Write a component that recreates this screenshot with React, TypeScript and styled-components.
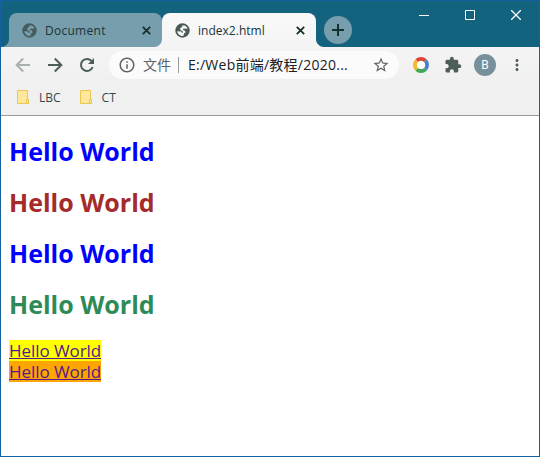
import React from 'react';
import styled, { createGlobalStyle } from 'styled-components';
import { MdInfoOutline, MdStarBorder, MdExtension, MdMoreVert } from 'react-icons/md';

const GlobalStyle = createGlobalStyle`
  * { box-sizing: border-box; }
  body { margin: 0; font-family: "Open Sans", "Noto Sans CJK SC", sans-serif; }
  svg { display: block; flex: none; }
`;

const Window = styled.div`
  width: 540px;
  height: 457px;
  border: 1px solid #1660a2;
  display: flex;
  flex-direction: column;
  background: #fff;
  overflow: hidden;
`;

const TitleBar = styled.header`
  height: 46px;
  flex: none;
  display: flex;
  align-items: flex-end;
  padding-left: 8px;
  background: #14637e;
`;

const Tab = styled.div<{ $active?: boolean }>`
  --fill: ${p => (p.$active ? '#f9f9f9' : '#779eac')};
  --foot: ${p => (p.$active ? '#f4f4f4' : '#779eac')};
  position: relative;
  z-index: ${p => (p.$active ? 1 : 0)};
  width: ${p => (p.$active ? 154 : 153)}px;
  height: 34px;
  padding: 0 11px 0 13px;
  display: flex;
  align-items: center;
  border-radius: 8px 8px 0 0;
  background: linear-gradient(var(--fill), var(--foot));
  color: ${p => (p.$active ? '#4a5b57' : '#465b5c')};

  &::before, &::after {
    content: '';
    position: absolute;
    bottom: 0;
    width: 8px;
    height: 8px;
  }
  &::before {
    left: -8px;
    background: radial-gradient(circle at 0 0, transparent 7.5px, var(--foot) 8.5px);
  }
  &::after {
    right: -8px;
    background: radial-gradient(circle at 100% 0, transparent 7.5px, var(--foot) 8.5px);
  }
`;

const TabTitle = styled.span<{ $spacing: number }>`
  flex: 1;
  margin-left: 8px;
  padding-top: 1px;
  font-size: 12px;
  line-height: 16px;
  letter-spacing: ${p => p.$spacing}px;
  white-space: nowrap;
  color: #19353a;
`;

const NewTab = styled.div`
  width: 28px;
  height: 28px;
  margin: 0 0 3px 8px;
  border-radius: 50%;
  display: grid;
  place-items: center;
  background: #779eac;
`;

const WindowControls = styled.div`
  display: flex;
  align-self: flex-start;
  margin-left: auto;
`;

const Control = styled.div`
  width: 46px;
  height: 28px;
  display: grid;
  place-items: center;
`;

const Chrome = styled.div`
  height: 69px;
  flex: none;
  border-bottom: 1px solid #999b9d;
  background: linear-gradient(#f4f4f4, #f0f0f0 34px);
`;

const Toolbar = styled.nav`
  height: 36px;
  display: flex;
  align-items: center;
  color: #4d5e59;
`;

const NavButtons = styled.div`
  display: flex;
  gap: 16px;
  width: 108px;
  padding-left: 14px;
`;

const Address = styled.div`
  display: flex;
  align-items: center;
  width: 290px;
  height: 28px;
  padding: 0 9px;
  border-radius: 14px;
  background: #fbfbfb;
  font-size: 14px;
  line-height: 20px;
  white-space: nowrap;
  color: #5f6368;
`;

const Scheme = styled.span`
  margin-left: 7px;
  padding-right: 7px;
`;

const Divider = styled.span`
  width: 1px;
  height: 16px;
  background: #999c9f;
`;

const Path = styled.span`
  flex: 1;
  margin-left: 9px;
  letter-spacing: 0.25px;
  color: #202124;
`;

const Actions = styled.div`
  display: flex;
  align-items: center;
  padding-left: 14px;
`;

const Extension = styled(MdExtension)`
  margin-left: 15px;
`;

const MenuDots = styled(MdMoreVert)`
  margin-left: -1px;
`;

const Avatar = styled.span`
  width: 22px;
  height: 22px;
  margin: 0 13px 0 12px;
  border-radius: 50%;
  display: grid;
  place-items: center;
  background: #78909c;
  color: #fff;
  font: 12px/22px Roboto, sans-serif;
`;

const Bookmarks = styled.div`
  height: 28px;
  display: flex;
  align-items: center;
  padding-left: 15px;
  gap: 18px;
`;

const Bookmark = styled.span`
  display: flex;
  align-items: center;
  gap: 10px;
  font-size: 12px;
  line-height: 16px;
  color: #35474b;
`;

const BookmarkLabel = styled.span`
  padding-top: 1px;
`;

const Page = styled.main`
  flex: 1;
  padding: 1px 8px 0;
`;

const Heading = styled.h1<{ $color: string }>`
  margin: 17px 0;
  font-size: 25px;
  font-weight: 700;
  line-height: 34px;
  color: ${p => p.$color};
`;

const Links = styled.div`
  display: flex;
  flex-direction: column;
  align-items: flex-start;
  padding-top: 2px;
`;

const Link = styled.a<{ $fill: string }>`
  height: 21px;
  line-height: 21px;
  font-size: 17px;
  letter-spacing: -0.07px;
  white-space: nowrap;
  color: #551a8b;
  text-decoration: underline;
  text-decoration-thickness: 1px;
  background: ${p => p.$fill};
`;

const Globe = ({ land }: { land: string }) => (
  <svg width="15" height="15" viewBox="0 0 15 15">
    <circle cx="7.5" cy="7.5" r="7.2" fill="currentColor" />
    <path
      d="M9.6 2.4C11 3 12.1 4 12.6 5.4l-2.2.3-1.7-.2-1 1.2 2.2 1 .8 1.6-1.7 1.3-.5 2.2-2 .1c-2.1-.5-4-2.2-4.3-4.6l4.1.3.6 1.3 1-.5-.3-1.5-2.1-.7-.4-1.9 1.7-1L7.4 2.6z"
      fill={land}
    />
  </svg>
);

const CloseTab = () => (
  <svg width="9" height="9" viewBox="0 0 9 9">
    <path d="M.8 .8l7.4 7.4M8.2 .8L.8 8.2" stroke="#17302f" strokeWidth="1.8" />
  </svg>
);

const NavIcon = styled.svg.attrs({ width: 16, height: 16, viewBox: '0 0 16 16' })<{ $disabled?: boolean }>`
  fill: none;
  stroke: ${p => (p.$disabled ? '#a8b0ae' : '#4d5e59')};
  stroke-width: 2;
`;

const FolderIcon = () => (
  <svg width="13" height="16" viewBox="0 0 13 16">
    <path d="M1.5 1.5h10v9h1v4h-11z" fill="#ffe79b" stroke="#e8c850" />
    <path d="M10.5 14v-3.5h2v4z" fill="#ffe79b" stroke="#e8c850" />
  </svg>
);

const ColorRing = () => (
  <svg width="16" height="16" viewBox="0 0 16 16" fill="none" strokeWidth="4">
    <path d="M3.76 3.76A6 6 0 0 1 12.24 3.76" stroke="#db4437" />
    <path d="M12.24 3.76A6 6 0 0 1 12.24 12.24" stroke="#4a80cc" />
    <path d="M12.24 12.24A6 6 0 0 1 3.76 12.24" stroke="#41a653" />
    <path d="M3.76 12.24A6 6 0 0 1 3.76 3.76" stroke="#f4b82a" />
    <circle cx="8" cy="8" r="4" fill="#fff" />
  </svg>
);

const headings = ['blue', 'brown', 'blue', 'seagreen'];
const links = ['yellow', 'orange'];

export default function App() {
  return (
    <>
      <GlobalStyle />
      <Window>
        <TitleBar>
          <Tab>
            <Globe land="#779eac" />
            <TabTitle $spacing={0.27}>Document</TabTitle>
            <CloseTab />
          </Tab>
          <Tab $active>
            <Globe land="#f7f7f7" />
            <TabTitle $spacing={0.02}>index2.html</TabTitle>
            <CloseTab />
          </Tab>
          <NewTab>
            <svg width="12" height="12"><path d="M6 0v12M0 6h12" stroke="#14302f" strokeWidth="2" /></svg>
          </NewTab>
          <WindowControls>
            <Control><svg width="10" height="10"><path d="M0 5.5h10" stroke="#fff" /></svg></Control>
            <Control><svg width="10" height="10"><path d="M.5 .5h9v9h-9z" stroke="#fff" fill="none" /></svg></Control>
            <Control><svg width="10" height="10"><path d="M0 0l10 10M10 0L0 10" stroke="#fff" strokeWidth="1.3" /></svg></Control>
          </WindowControls>
        </TitleBar>
        <Chrome>
          <Toolbar>
            <NavButtons>
              <NavIcon $disabled><path d="M15 8H2.5M8.2 1.5L1.7 8l6.5 6.5" /></NavIcon>
              <NavIcon><path d="M1 8h12.5M7.8 1.5L14.3 8l-6.5 6.5" /></NavIcon>
              <NavIcon>
                <path d="M13.6 10A6 6 0 1 1 12.4 3.9L14 5.5" />
                <path d="M15 1v6H9z" fill="#4d5e59" stroke="none" />
              </NavIcon>
            </NavButtons>
            <Address>
              <MdInfoOutline size={18} />
              <Scheme>文件</Scheme>
              <Divider />
              <Path>E:/Web前端/教程/2020...</Path>
              <MdStarBorder size={18} />
            </Address>
            <Actions>
              <ColorRing />
              <Extension size={18} />
              <Avatar>B</Avatar>
              <MenuDots size={18} />
            </Actions>
          </Toolbar>
          <Bookmarks>
            <Bookmark><FolderIcon /><BookmarkLabel>LBC</BookmarkLabel></Bookmark>
            <Bookmark><FolderIcon /><BookmarkLabel>CT</BookmarkLabel></Bookmark>
          </Bookmarks>
        </Chrome>
        <Page>
          {headings.map((color, i) => <Heading key={i} $color={color}>Hello World</Heading>)}
          <Links>
            {links.map(fill => <Link key={fill} $fill={fill}>Hello World</Link>)}
          </Links>
        </Page>
      </Window>
    </>
  );
}
